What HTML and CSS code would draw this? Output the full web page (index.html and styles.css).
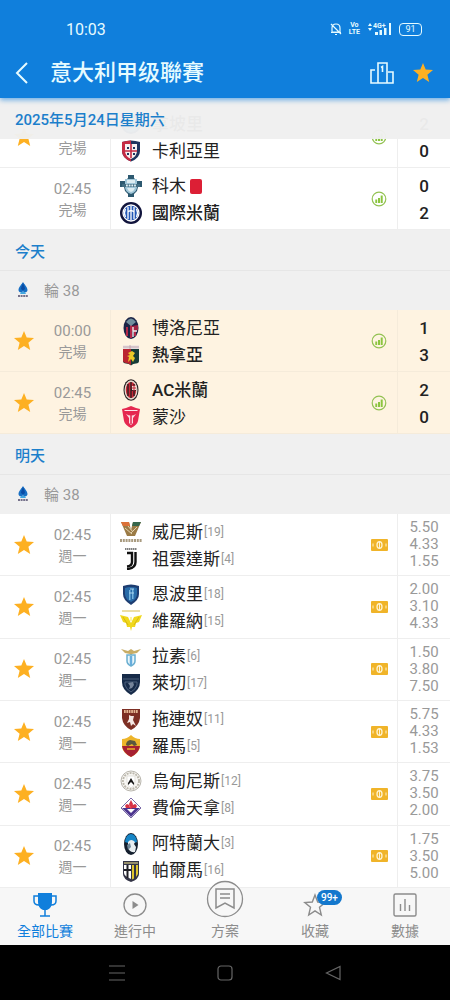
FILE: index.html
```html
<!DOCTYPE html>
<html lang="zh-Hant">
<head>
    <meta charset="UTF-8">
    <meta name="viewport" content="width=device-width, initial-scale=1">
    <title>意大利甲级聯賽</title>
    <link rel="stylesheet" href="styles.css">
</head>
<body>

<!-- shared icons and club crests -->
<svg class="sprite" aria-hidden="true">
    <symbol id="star" viewBox="0 0 22 22"><path d="M11 1l2.700 6.600 7.300.5-5.600 4.700 1.800 7.200-6.200-3.900L4.800 20l1.800-7.200L1 8.100l7.300-.5z" fill="#fdb022"/></symbol>
    <symbol id="stats" viewBox="0 0 16 16"><circle cx="8" cy="8" r="6.800" fill="none" stroke="#93c253" stroke-width="1.200"/><path d="M4.300 8.500h1.900V12H4.300zM7 7h2v5H7zM9.700 4.500h2V12h-2z" fill="#8bc53f"/></symbol>
    <symbol id="money" viewBox="0 0 17 12"><rect width="17" height="12" rx="1" fill="#f0b429"/><ellipse cx="8.500" cy="6" rx="2.500" ry="3.300" fill="none" stroke="#fff3d0" stroke-width="1.300"/><path d="M8.500 2v8M2 4.500v3M15 4.500v3" stroke="#fff3d0" stroke-width="1"/></symbol>
    <symbol id="serie-a" viewBox="0 0 12 16"><path d="M6 0c1 2 4.500 5 4.500 8 0 2-1.800 2.500-3 2.200L6 9.500l-1.500.7c-1.200.3-3-.2-3-2.200C1.500 5 5 2 6 0z" fill="#176fc4"/><path d="M6 1c.6 2 2 4 2 6L6 8.500 4 7c0-2 1.400-4 2-6z" fill="#0a4ca5"/><path d="M4 10h4l1 2H3z" fill="#42a6e0"/><path d="M1 14h10" stroke="#76728b" stroke-width="2" stroke-dasharray="2 .6"/></symbol>

    <symbol id="napoli" viewBox="0 0 22 22"><circle cx="11" cy="11" r="9" fill="#2f9bd8" stroke="#0b3c7c" stroke-width="2"/></symbol>
    <symbol id="cagliari" viewBox="0 0 22 22"><path d="M2 2q9-3 18 0v9q0 7-9 10.500Q2 18 2 11z" fill="#20355f"/><path d="M2 2Q7 .5 11 .5v21Q2 18 2 11z" fill="#c52a43"/><path d="M5 4h12v7q0 5-6 8Q5 16 5 11z" fill="#f5f1f1"/><path d="M11 4v14M5 11h12" stroke="#c52a43" stroke-width="1.600"/><path d="M7 7h2v2H7zm6 0h2v2h-2zM7 13h2v2H7zm6 0h2v2h-2z" fill="#20355f"/></symbol>
    <symbol id="como" viewBox="0 0 22 22"><path d="M8 0h6v3l3 3h5v6h-4l-1 4-3 3v3H8v-3l-3-3-1-4H0V6h5l3-3z" fill="#2d5970"/><path d="M5 4h12v8q0 5-6 7-6-2-6-7z" fill="#9fc6d8"/><path d="M7 5h8v3H7zm0 8h8q-1 3-4 4-3-1-4-4z" fill="#dcecf1"/><path d="M2 10.500h18" stroke="#416d82" stroke-width="3"/><path d="M6 10.500h10" stroke="#e4f2f7" stroke-width="2" stroke-dasharray="1.800 .9"/></symbol>
    <symbol id="inter" viewBox="0 0 22 22"><circle cx="11" cy="11" r="11" fill="#11143c"/><circle cx="11" cy="11" r="8" fill="#2257b5" stroke="#fff" stroke-width="1.300"/><path d="M8 5v12M14 5v12M11 4v14M8 10l3-2 3 2M5.500 7q-2 4 0 8M16.500 7q2 4 0 8" fill="none" stroke="#fff" stroke-width="1.300"/></symbol>
    <symbol id="bologna" viewBox="0 0 22 22"><ellipse cx="11" cy="11" rx="7.500" ry="11" fill="#1b2446"/><path d="M10 6h2v15h-2zM6 10h2v9H6zm8-1h2v10h-2z" fill="#b22848"/><path d="M12 9l6-1v5l-6 1z" fill="#a02443"/><path d="M6 5q5-7 10 0l-5 4z" fill="#718f9e"/><path d="M13 10v10M13 14h4" stroke="#f4eaea" stroke-width="1.400"/></symbol>
    <symbol id="genoa" viewBox="0 0 22 22"><path d="M3 3h16v14q0 2-3 2.500-3 .2-5 2-2-1.800-5-2Q3 19 3 17z" fill="#173c38"/><path d="M3 4h8v17q-2-1.600-5-2-3-.3-3-2z" fill="#ba2531"/><path d="M3 1.500h16V5H3z" fill="#e6dcdf"/><path d="M10 1v4M3 3h16" stroke="#b89aa1" stroke-width=".7"/><path d="M8 9l4-2 3 2-2 3 2 2-2 4-2-3-3 3 1-5-2-1 3-1z" fill="#ebc928"/></symbol>
    <symbol id="milan" viewBox="0 0 22 22"><ellipse cx="11" cy="11" rx="7.500" ry="10.800" fill="#261e20"/><ellipse cx="11" cy="11" rx="6.500" ry="9.700" fill="#e3d9cd"/><ellipse cx="11" cy="11" rx="5.200" ry="8" fill="#c72737"/><path d="M8 5v12M11 3v16M14 5v12M11 11h5" stroke="#261e20" stroke-width="1.300"/><path d="M12 7h4v4h-4z" fill="#eee3dc"/><path d="M14 6v6M12 9h4" stroke="#c72737"/></symbol>
    <symbol id="monza" viewBox="0 0 22 22"><path d="M2 3l4-1 5-2 5 2 4 1-2 12q-1 4-7 7-6-3-7-7z" fill="#e52850"/><path d="M4 4h14l-1 1H5z" fill="#fbe6eb"/><path d="M6 8q5 3 10 0l-3 4v5l-2 2-2-2v-5z" fill="#fbdce3"/><path d="M11 7v11" stroke="#e52850" stroke-width="1.500"/></symbol>
    <symbol id="venezia" viewBox="0 0 22 22"><path d="M1 1h8l2 8 2-8h8l-6 14H7z" fill="#9b7b46"/><path d="M1 1h8l1 4H3z" fill="#db7138"/><path d="M13 1h8l-2 4h-7z" fill="#36664b"/><path d="M5 7l7 6M8 5l5 6M17 6l-6 6" stroke="#e4d3af"/><path d="M0 19.500h22" stroke="#a99b80" stroke-width="3" stroke-dasharray="2 .8"/></symbol>
    <symbol id="juventus" viewBox="0 0 22 22"><path d="M5 1h12" stroke="#555" stroke-width="1.600" stroke-dasharray="1.500 .5"/><path d="M7 5h5v9q0 4-5 4.500" fill="none" stroke="#111" stroke-width="2.400"/><path d="M15.500 4v10q0 6.500-8.500 7" fill="none" stroke="#111" stroke-width="2.400"/></symbol>
    <symbol id="empoli" viewBox="0 0 22 22"><path d="M3 3q8-3 16 0v8q0 6-8 11-8-5-8-11z" fill="#1d3d71"/><path d="M5 5q6-2 12 0v6q0 5-6 8-6-3-6-8z" fill="#286ba8"/><path d="M9 7h1.500v10H9zm3-1h1.500v10H12z" fill="#75b6df"/><path d="M9 10h5M10 6h4" stroke="#a9d3ec"/></symbol>
    <symbol id="verona" viewBox="0 0 22 22"><path d="M2 1h18" stroke="#d9bd4b"/><path d="M0 5l8 2 3 6 3-6 8-2-3 7-3 1-1 4h-3l-1 4-1-4H7l-1-4-3-1z" fill="#f0d81c"/><path d="M3 7l5 8M19 7l-5 8" stroke="#d9b711"/><path d="M10 7h2v4h-2z" fill="#fff3a0"/></symbol>
    <symbol id="lazio" viewBox="0 0 22 22"><path d="M1 3l7 2 3-2 3 2 7-2-4 4-5 1v2h-2V8L5 7z" fill="#c8ad66"/><path d="M7 9h8v6q0 3-4 5-4-2-4-5z" fill="#e9f6fb" stroke="#69aed0" stroke-width="1.500"/><path d="M11 10v9" stroke="#67addd" stroke-width="2.500"/></symbol>
    <symbol id="lecce" viewBox="0 0 22 22"><path d="M2 1h18v8q0 8-9 13Q2 17 2 9z" fill="#172b49"/><path d="M3 6h16M5 9h12v3q-1 4-6 7-5-3-6-7z" fill="none" stroke="#4d607c"/><path d="M8 10l5-1 1 3-2 3-3 1 1-3z" fill="#75849a"/></symbol>
    <symbol id="torino" viewBox="0 0 22 22"><path d="M2 1h18v9q-1 8-9 12Q3 18 2 10z" fill="#7d2f24"/><path d="M4 3.500h14" stroke="#e4b692" stroke-width="3" stroke-dasharray="1.700 .7"/><path d="M9 7l2 1 3 0-1 4 3 6-3-2-2 2-1-4-3 1 2-4z" fill="#f5e9e4"/></symbol>
    <symbol id="roma" viewBox="0 0 22 22"><path d="M2 4q5 0 9-4 4 4 9 4v8q-1 6-9 10-8-4-9-10z" fill="#edb52b"/><path d="M2 11h18q-1 7-9 11-8-4-9-11z" fill="#a72032"/><path d="M6 10q0-4 4-5l5 1 2 4-3 1-2-2-4 2z" fill="#5b573e"/><path d="M7 14h8" stroke="#edb52b" stroke-width="1.500"/></symbol>
    <symbol id="udinese" viewBox="0 0 22 22"><circle cx="11" cy="11" r="10" fill="#f8f7f4" stroke="#b9b6ae"/><circle cx="11" cy="11" r="8" fill="none" stroke="#bdb9ae" stroke-width="2" stroke-dasharray="2 1"/><path d="M7 6h8v6q0 4-4 6-4-2-4-6z" fill="#fff" stroke="#d8d6d0" stroke-width=".7"/><path d="M8 13l3-5 3 5v2l-3-3-3 3z" fill="#191919"/></symbol>
    <symbol id="fiorentina" viewBox="0 0 22 22"><path d="M11 1l10 10-10 10L1 11z" fill="#fff" stroke="#7a6aa7"/><path d="M2 11h18l-9 9z" fill="#4c358f"/><path d="M11 3l2 4-2 7-2-7zM7 7q-3 1-1 4h4q1-3-3-4zM15 7q3 1 1 4h-4q-1-3 3-4z" fill="#d83246"/><path d="M7 12l4 4 4-4" fill="#fff"/></symbol>
    <symbol id="atalanta" viewBox="0 0 22 22"><ellipse cx="11" cy="11" rx="7" ry="11" fill="#141f2e"/><path d="M5 9q1-8 6-8t6 8l-6 2z" fill="#1685c6"/><path d="M8 9q3-4 7 0l-1 2 2 3-1 5q-6 1-7-5z" fill="#e7edf0"/><path d="M7 12l3-2 1 4-3 3z" fill="#708797"/></symbol>
    <symbol id="parma" viewBox="0 0 22 22"><path d="M3 1h16v13q0 5-8 8-8-3-8-8z" fill="#343547"/><path d="M4 5h7v14q-7-3-7-6z" fill="#fff"/><path d="M7.500 5v13M4 10h7" stroke="#202026" stroke-width="2"/><path d="M12 5h2v13.500l-2 1zM16 5h2v9l-2 3z" fill="#dfc52e"/><path d="M4 3h14" stroke="#b4ad77" stroke-width="1.500"/></symbol>
</svg>

<div class="app">
    <header class="header">
        <div class="status-bar">
            <time>10:03</time>
            <div class="status-icons">
                <svg width="12" height="14" viewBox="0 0 12 14" fill="none" stroke="currentColor" stroke-width="1.200"><path d="M2 10V6q0-4 4-4t4 4v4zM1 10.500h10M5 12.500h2M1 2l10 10"/></svg>
                <span class="volte"><span>Vo</span><span>LTE</span></span>
                <svg width="25" height="14" viewBox="0 0 25 14"><path d="M1 4l2-3 2 3zM1 6l2 3 2-3zM8 10h3v3H8zM12.500 8h2.500v5h-2.500zM17 6h2.500v7H17zM22 1h2v12h-2z" fill="currentColor"/><text x="6" y="6" class="signal-text">4G+</text></svg>
                <span class="battery">91</span>
            </div>
        </div>
        <div class="title-bar">
            <button class="back" aria-label="返回"><svg width="13" height="22" viewBox="0 0 13 22"><path d="M12 1L2 11l10 10" fill="none" stroke="currentColor" stroke-width="2"/></svg></button>
            <h1>意大利甲级聯賽</h1>
            <button class="title-btn" aria-label="排名"><svg width="24" height="22" viewBox="0 0 24 22" fill="none" stroke="currentColor" stroke-width="1.600"><path d="M5 8H1v13h22V10h-5M8 21V1h9v20M11 5.500l1.500-1V10"/></svg></button>
            <button class="title-btn" aria-label="收藏聯賽"><svg width="22" height="22"><use href="#star"/></svg></button>
        </div>
    </header>

    <main class="list">
        <h2 class="day floating">2025年5月24日星期六</h2>

        <ul class="matches first">
            <li class="match">
                <button class="fav" aria-label="收藏"><svg><use href="#star"/></svg></button>
                <div class="when"><span>&nbsp;</span><span>完場</span></div>
                <div class="teams">
                    <div class="team win"><svg><use href="#napoli"/></svg>拿坡里</div>
                    <div class="team"><svg><use href="#cagliari"/></svg>卡利亞里</div>
                </div>
                <svg class="stats"><use href="#stats"/></svg>
                <div class="score"><span>2</span><span>0</span></div>
            </li>
            <li class="match">
                <span></span>
                <div class="when"><span>02:45</span><span>完場</span></div>
                <div class="teams">
                    <div class="team"><svg><use href="#como"/></svg>科木<i class="red-card"></i></div>
                    <div class="team win"><svg><use href="#inter"/></svg>國際米蘭</div>
                </div>
                <svg class="stats"><use href="#stats"/></svg>
                <div class="score"><span>0</span><span>2</span></div>
            </li>
        </ul>

        <h2 class="day">今天</h2>
        <h3 class="round"><svg><use href="#serie-a"/></svg>輪 38</h3>
        <ul class="matches today">
            <li class="match">
                <button class="fav" aria-label="收藏"><svg><use href="#star"/></svg></button>
                <div class="when"><span>00:00</span><span>完場</span></div>
                <div class="teams">
                    <div class="team"><svg><use href="#bologna"/></svg>博洛尼亞</div>
                    <div class="team win"><svg><use href="#genoa"/></svg>熱拿亞</div>
                </div>
                <svg class="stats"><use href="#stats"/></svg>
                <div class="score"><span>1</span><span>3</span></div>
            </li>
            <li class="match">
                <button class="fav" aria-label="收藏"><svg><use href="#star"/></svg></button>
                <div class="when"><span>02:45</span><span>完場</span></div>
                <div class="teams">
                    <div class="team win"><svg><use href="#milan"/></svg>AC米蘭</div>
                    <div class="team"><svg><use href="#monza"/></svg>蒙沙</div>
                </div>
                <svg class="stats"><use href="#stats"/></svg>
                <div class="score"><span>2</span><span>0</span></div>
            </li>
        </ul>

        <h2 class="day">明天</h2>
        <h3 class="round"><svg><use href="#serie-a"/></svg>輪 38</h3>
        <ul class="matches upcoming">
            <li class="match">
                <button class="fav" aria-label="收藏"><svg><use href="#star"/></svg></button>
                <div class="when"><span>02:45</span><span>週一</span></div>
                <div class="teams">
                    <div class="team"><svg><use href="#venezia"/></svg>威尼斯<small>[19]</small></div>
                    <div class="team"><svg><use href="#juventus"/></svg>祖雲達斯<small>[4]</small></div>
                </div>
                <svg class="money"><use href="#money"/></svg>
                <div class="odds"><span>5.50</span><span>4.33</span><span>1.55</span></div>
            </li>
            <li class="match">
                <button class="fav" aria-label="收藏"><svg><use href="#star"/></svg></button>
                <div class="when"><span>02:45</span><span>週一</span></div>
                <div class="teams">
                    <div class="team"><svg><use href="#empoli"/></svg>恩波里<small>[18]</small></div>
                    <div class="team"><svg><use href="#verona"/></svg>維羅納<small>[15]</small></div>
                </div>
                <svg class="money"><use href="#money"/></svg>
                <div class="odds"><span>2.00</span><span>3.10</span><span>4.33</span></div>
            </li>
            <li class="match">
                <button class="fav" aria-label="收藏"><svg><use href="#star"/></svg></button>
                <div class="when"><span>02:45</span><span>週一</span></div>
                <div class="teams">
                    <div class="team"><svg><use href="#lazio"/></svg>拉素<small>[6]</small></div>
                    <div class="team"><svg><use href="#lecce"/></svg>萊切<small>[17]</small></div>
                </div>
                <svg class="money"><use href="#money"/></svg>
                <div class="odds"><span>1.50</span><span>3.80</span><span>7.50</span></div>
            </li>
            <li class="match">
                <button class="fav" aria-label="收藏"><svg><use href="#star"/></svg></button>
                <div class="when"><span>02:45</span><span>週一</span></div>
                <div class="teams">
                    <div class="team"><svg><use href="#torino"/></svg>拖連奴<small>[11]</small></div>
                    <div class="team"><svg><use href="#roma"/></svg>羅馬<small>[5]</small></div>
                </div>
                <svg class="money"><use href="#money"/></svg>
                <div class="odds"><span>5.75</span><span>4.33</span><span>1.53</span></div>
            </li>
            <li class="match">
                <button class="fav" aria-label="收藏"><svg><use href="#star"/></svg></button>
                <div class="when"><span>02:45</span><span>週一</span></div>
                <div class="teams">
                    <div class="team"><svg><use href="#udinese"/></svg>烏甸尼斯<small>[12]</small></div>
                    <div class="team"><svg><use href="#fiorentina"/></svg>費倫天拿<small>[8]</small></div>
                </div>
                <svg class="money"><use href="#money"/></svg>
                <div class="odds"><span>3.75</span><span>3.50</span><span>2.00</span></div>
            </li>
            <li class="match">
                <button class="fav" aria-label="收藏"><svg><use href="#star"/></svg></button>
                <div class="when"><span>02:45</span><span>週一</span></div>
                <div class="teams">
                    <div class="team"><svg><use href="#atalanta"/></svg>阿特蘭大<small>[3]</small></div>
                    <div class="team"><svg><use href="#parma"/></svg>帕爾馬<small>[16]</small></div>
                </div>
                <svg class="money"><use href="#money"/></svg>
                <div class="odds"><span>1.75</span><span>3.50</span><span>5.00</span></div>
            </li>
        </ul>
    </main>

    <nav class="tabs">
        <a href="#all" class="active">
            <svg width="24" height="26" viewBox="0 0 24 26"><path d="M5 1h14v9q0 6-5 8h-4q-5-2-5-8z" fill="currentColor"/><path d="M5 4H1v5q0 4 5 4M19 4h4v5q0 4-5 4M12 17v7M7 24h10" fill="none" stroke="currentColor" stroke-width="1.500"/></svg>
            全部比賽
        </a>
        <a href="#live">
            <svg width="24" height="26" viewBox="0 0 24 26"><circle cx="12" cy="13" r="11" fill="none" stroke="currentColor" stroke-width="1.300"/><path d="M9.500 9l6 4-6 4z" fill="currentColor"/></svg>
            進行中
        </a>
        <a href="#plan" class="plan">
            <svg width="38" height="38" viewBox="0 0 38 38"><circle cx="19" cy="19" r="17.500" fill="#f7f7f7" stroke="currentColor" stroke-width="1.300"/><path d="M10 9h18v19l-9-5-9 5zM14 14h10M14 18h10" fill="none" stroke="currentColor" stroke-width="1.500"/></svg>
            方案
        </a>
        <a href="#fav">
            <svg width="24" height="26" viewBox="0 0 24 26"><path d="M12 3l2.700 7 7.500.5-5.700 4.800 1.800 7.700-6.300-4.200L5.700 23l1.800-7.700-5.700-4.800 7.500-.5z" fill="none" stroke="currentColor" stroke-width="1.400"/></svg>
            收藏
            <span class="badge">99+</span>
        </a>
        <a href="#data">
            <svg width="24" height="26" viewBox="0 0 24 26" fill="none" stroke="currentColor" stroke-width="1.400"><rect x="1" y="2" width="22" height="22" rx="1.500"/><path d="M7.500 12v7M12 7v12M16.500 13v6"/></svg>
            數據
        </a>
    </nav>

    <footer class="system-nav">
        <button aria-label="最近"><svg width="16" height="16" viewBox="0 0 16 16"><path d="M0 1h16M0 8h16M0 15h16"/></svg></button>
        <button aria-label="主頁"><svg width="16" height="16" viewBox="0 0 16 16"><rect x="1" y="1" width="14" height="14" rx="3"/></svg></button>
        <button aria-label="返回上頁"><svg width="16" height="16" viewBox="0 0 16 16"><path d="M15 1.500v13L1.500 8z"/></svg></button>
    </footer>
</div>

</body>
</html>
```
FILE: styles.css
```css
* {
    box-sizing: border-box;
}
body {
    margin: 0;
    font-family: Roboto, "Noto Sans CJK TC", sans-serif;
    color: #222;
    background: #fff;
}
button {
    display: flex;
    justify-content: center;
    align-items: center;
    padding: 0;
    border: none;
    background: none;
    color: inherit;
    cursor: pointer;
}
h1, h2, h3, ul {
    margin: 0;
    padding: 0;
}
.sprite {
    position: absolute;
    width: 0;
    height: 0;
}
.app {
    display: flex;
    flex-direction: column;
    min-height: 100vh;
}

/* Header */
.header {
    position: relative;
    z-index: 3;
    background: #107fdc;
    color: #e6fbff;
    box-shadow: 0 2px 5px rgba(16, 127, 220, 0.6);
}
.status-bar {
    display: flex;
    justify-content: space-between;
    align-items: center;
    height: 58px;
    padding: 0 28px 0 66px;
    font-size: 16px;
}
.status-icons {
    display: flex;
    align-items: center;
    gap: 7px;
}
.volte {
    display: flex;
    flex-direction: column;
    font-size: 7px;
    font-weight: 700;
    line-height: 7px;
    text-align: center;
}
.signal-text {
    font-size: 7px;
    font-weight: 700;
    fill: currentColor;
}
.battery {
    width: 23px;
    border: 1px solid;
    border-radius: 4px;
    font-size: 9px;
    line-height: 11px;
    text-align: center;
}
.title-bar {
    display: flex;
    align-items: center;
    height: 40px;
    padding: 0 16px 10px 15px;
}
.title-bar h1 {
    flex: 1;
    margin-left: 22px;
    font-size: 22px;
    font-weight: 500;
    line-height: 30px;
}
.title-btn {
    margin-left: 18px;
}

/* Match list */
.list {
    position: relative;
    flex: 1;
    display: flex;
    flex-direction: column;
    padding-top: 8px;
}
.day {
    height: 41px;
    padding-left: 15px;
    border-bottom: 1px solid #e6e6e6;
    background: #f0f0f0;
    color: #1c7fcb;
    font-size: 15px;
    font-weight: 500;
    line-height: 44px;
}
.day.floating {
    position: absolute;
    top: 0;
    left: 0;
    right: 0;
    z-index: 2;
    border-bottom: none;
    background: rgba(240, 240, 240, 0.97);
}
.round {
    display: flex;
    align-items: center;
    gap: 15px;
    height: 39px;
    padding: 0 0 2px 17px;
    background: #f0f0f0;
    color: #999;
    font-size: 15px;
    font-weight: 400;
}
.round svg {
    width: 12px;
    height: 16px;
}
.matches {
    display: grid;
    grid-auto-rows: minmax(62px, 1fr);
    list-style: none;
}
.upcoming {
    flex: 1;
}
.match {
    display: grid;
    grid-template-columns: 48px 62px 1fr 36px 53px;
    border-bottom: 1px solid #eee;
}
.today {
    background: #fef3e1;
}
.today .match,
.today .teams,
.today .score {
    border-color: #f5ebda;
}
.fav svg {
    width: 22px;
    height: 22px;
}
.when {
    display: flex;
    flex-direction: column;
    justify-content: center;
    padding: 2px 13px 0 0;
    color: #999;
    font-size: 15px;
    line-height: 21px;
    text-align: center;
}
.when span + span {
    font-size: 14px;
}
.teams {
    display: flex;
    flex-direction: column;
    justify-content: center;
    padding: 2px 0 0 9px;
    border-left: 1px solid #eee;
}
.team {
    display: flex;
    align-items: center;
    font-size: 17px;
    line-height: 27px;
}
.team svg {
    width: 22px;
    height: 22px;
    margin-right: 10px;
}
.team.win {
    font-weight: 500;
}
.team small {
    margin-left: 1px;
    color: #999;
    font-size: 12px;
}
.red-card {
    width: 12px;
    height: 15px;
    margin-left: 4px;
    border-radius: 2px;
    background: #dc1f35;
}
.stats,
.money {
    place-self: center;
    width: 16px;
    height: 16px;
}
.money {
    width: 17px;
    height: 12px;
}
.score,
.odds {
    display: flex;
    flex-direction: column;
    justify-content: center;
    border-left: 1px solid #eee;
    text-align: center;
}
.score {
    padding-top: 2px;
    font-size: 17px;
    font-weight: 500;
    line-height: 27px;
}
.odds {
    color: #999;
    font-size: 15px;
    line-height: 17px;
}

/* Bottom tabs */
.tabs {
    position: relative;
    z-index: 2;
    display: grid;
    grid-template-columns: repeat(5, 1fr);
    grid-template-rows: 57px;
    background: #f7f7f7;
}
.tabs a {
    position: relative;
    display: flex;
    flex-direction: column;
    justify-content: flex-end;
    align-items: center;
    gap: 3px;
    padding-bottom: 4px;
    color: #8c8c8c;
    font-size: 14px;
    line-height: 20px;
    text-decoration: none;
}
.tabs svg {
    flex-shrink: 0;
}
.tabs a.active {
    color: #107fdc;
}
.badge {
    position: absolute;
    top: 2px;
    left: 50%;
    margin-left: 2px;
    padding: 0 4px;
    border-radius: 8px;
    background: #1478cd;
    color: #fff;
    font-size: 10px;
    font-weight: 500;
    line-height: 15px;
}

/* Phone navigation */
.system-nav {
    display: flex;
    justify-content: center;
    gap: 92px;
    height: 55px;
    background: #000;
}
.system-nav svg {
    fill: none;
    stroke: #666;
    stroke-width: 1.2;
}
```
